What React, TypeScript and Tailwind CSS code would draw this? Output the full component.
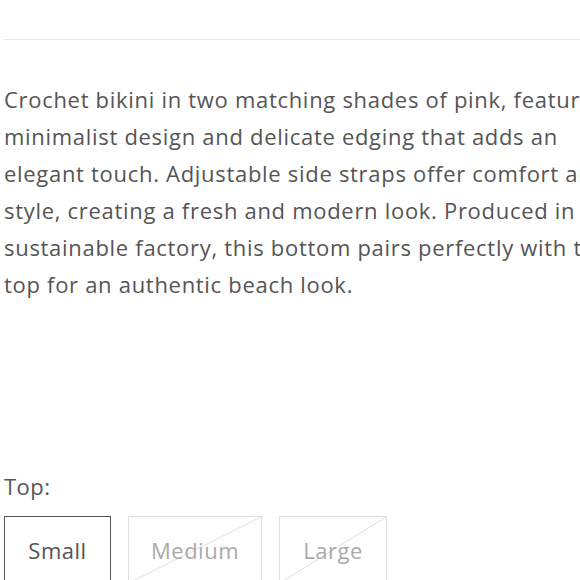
import React from "react";

const lines = [
  "Crochet bikini in two matching shades of pink, featuring a",
  "minimalist design and delicate edging that adds an",
  "elegant touch. Adjustable side straps offer comfort and",
  "style, creating a fresh and modern look. Produced in a",
  "sustainable factory, this bottom pairs perfectly with the",
  "top for an authentic beach look.",
];

const sizes = [
  { label: "Small", width: "w-[107px]", available: true },
  { label: "Medium", width: "w-[134px]", available: false },
  { label: "Large", width: "w-[108px]", available: false },
];

export default function App() {
  return (
    <div
      className="w-[580px] h-[580px] overflow-hidden bg-white pl-1 text-[#555555]"
      style={{ fontFamily: '"Open Sans", "Liberation Sans", sans-serif' }}
    >
      <div className="pt-[39px]">
        <div className="h-px w-[600px] bg-[#e6e6e6]" />
      </div>

      <p className="mt-[41px] whitespace-nowrap text-[22px] leading-[37px] tracking-[0.7px]">
        {lines.map((l, i) => (
          <span key={i} className="block">
            {l}
          </span>
        ))}
      </p>

      <div className="mt-[165px] text-[22px] leading-[36px] tracking-[0.5px]">Top:</div>

      <div className="mt-[12px] flex gap-[17px]">
        {sizes.map((s) => (
          <div
            key={s.label}
            className={`relative flex h-[68px] shrink-0 items-center justify-center border text-[22px] tracking-[0.5px] ${s.width} ${
              s.available ? "border-[#555555] text-[#555555]" : "border-[#dedede] text-[#aaaaaa]"
            }`}
          >
            {!s.available && (
              <svg
                className="absolute inset-0 h-full w-full"
                viewBox="0 0 100 100"
                preserveAspectRatio="none"
              >
                <line x1="0" y1="100" x2="100" y2="0" stroke="#dedede" strokeWidth="1" vectorEffect="non-scaling-stroke" />
              </svg>
            )}
            <span className="relative">{s.label}</span>
          </div>
        ))}
      </div>
    </div>
  );
}
